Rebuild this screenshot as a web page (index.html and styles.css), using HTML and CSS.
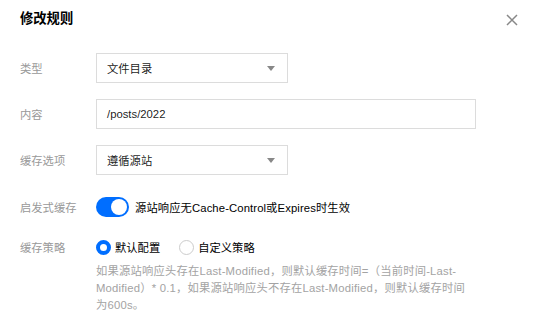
FILE: index.html
```html
<!DOCTYPE html>
<html lang="zh-CN">
<head>
<meta charset="utf-8">
<link rel="stylesheet" href="styles.css">
</head>
<body>
<div class="dialog">
  <div class="header">
    <h1 class="title">修改规则</h1>
    <button class="close" aria-label="关闭">
      <svg width="12" height="12" viewBox="0 0 12 12"><path d="M1 1L11 11M11 1L1 11" stroke="#888" stroke-width="1.5" fill="none"/></svg>
    </button>
  </div>
  <div class="form">
    <div class="row row-field">
      <div class="label">类型</div>
      <div class="select"><span>文件目录</span><i class="arrow"></i></div>
    </div>
    <div class="row row-field">
      <div class="label">内容</div>
      <div class="input">/posts/2022</div>
    </div>
    <div class="row row-field">
      <div class="label">缓存选项</div>
      <div class="select"><span>遵循源站</span><i class="arrow"></i></div>
    </div>
    <div class="row row-toggle">
      <div class="label">启发式缓存</div>
      <div class="control">
        <span class="switch"><span class="knob"></span></span>
        <span class="text">源站响应无Cache-Control或Expires时生效</span>
      </div>
    </div>
    <div class="row row-radio">
      <div class="label">缓存策略</div>
      <div class="control">
        <label class="radio checked"><span class="dot"></span><span class="text">默认配置</span></label>
        <label class="radio"><span class="dot"></span><span class="text">自定义策略</span></label>
      </div>
    </div>
    <div class="row row-help">
      <div class="label"></div>
      <p class="help">如果源站响应头存在Last-Modified，则默认缓存时间=（当前时间-Last-Modified）* 0.1，如果源站响应头不存在Last-Modified，则默认缓存时间为600s。</p>
    </div>
  </div>
</div>
</body>
</html>
```
FILE: styles.css
```css
* { box-sizing: border-box; }
html, body { margin: 0; padding: 0; background: #fff; }
body {
  font-family: "Liberation Sans", "Noto Sans CJK SC", sans-serif;
  font-size: 11.3px;
  color: rgba(0,0,0,0.9);
}
.dialog { width: 545px; height: 313px; overflow: hidden; padding: 0 20px; }
.header {
  display: flex;
  align-items: center;
  justify-content: space-between;
  height: 36px;
  padding-top: 1px;
}
.title { margin: 0; font-size: 13.3px; font-weight: bold; color: #000; line-height: 20px; }
.close {
  border: 0; background: none; padding: 0; margin-right: 6px; margin-top: 3px;
  width: 14px; height: 14px; display: flex; align-items: center; justify-content: center;
}
.form { padding-top: 17px; display: flex; flex-direction: column; }
.row { display: grid; grid-template-columns: 76px 1fr; align-items: center; }
.row-field { height: 30px; margin-bottom: 16px; }
.row-toggle { height: 20px; margin-top: 6px; margin-bottom: 20px; }
.row-radio { height: 20px; }
.row-help { align-items: start; margin-top: 6px; }
.label { color: #999; }
.select, .input {
  height: 30px;
  border: 1px solid #dcdcdc;
  display: flex;
  align-items: center;
  padding: 0 10px;
  color: rgba(0,0,0,0.9);
}
.select { width: 192px; justify-content: space-between; }
.input { width: 380px; }
.arrow {
  width: 0; height: 0;
  border-left: 4px solid transparent;
  border-right: 4px solid transparent;
  border-top: 5px solid #888;
  margin-right: 2px;
}
.control { display: flex; align-items: center; }
.switch {
  width: 33px; height: 20px; border-radius: 10px;
  background: #006eff;
  display: flex; align-items: center; justify-content: flex-end;
  padding: 2px;
}
.knob { width: 16px; height: 16px; border-radius: 50%; background: #fff; }
.switch + .text { margin-left: 6px; color: #000; letter-spacing: 0.1px; }
.radio { display: flex; align-items: center; margin-right: 19px; color: #000; }
.dot {
  width: 15px; height: 15px; border-radius: 50%;
  border: 1px solid #ccc; background: #fff; margin-right: 4px;
}
.radio.checked .dot { border: 4px solid #006eff; }
.help {
  margin: 0; width: 376px; color: #a3a3a3; line-height: 17px; letter-spacing: 0.2px;
}
```
